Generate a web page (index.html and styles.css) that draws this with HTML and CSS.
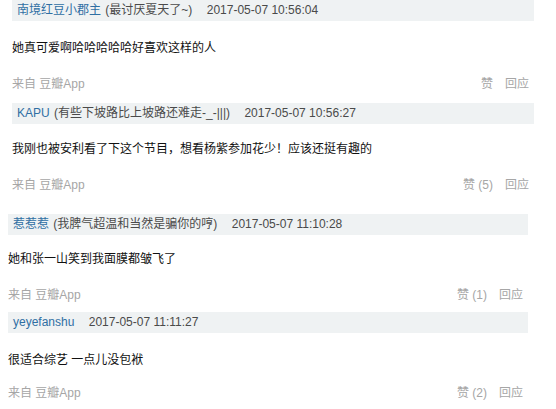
FILE: index.html
```html
<!DOCTYPE html>
<html lang="zh-CN">
<head>
    <meta charset="UTF-8">
    <meta name="viewport" content="width=device-width, initial-scale=1.0">
    <title>回应</title>
    <link rel="stylesheet" href="styles.css">
</head>
<body>
    <section class="comments">
        <div class="comment c1">
            <div class="head">
                <a class="name">南境红豆小郡主</a>
                <span class="sign">(最讨厌夏天了~)</span>
                <span class="time">2017-05-07 10:56:04</span>
            </div>
            <p class="text">她真可爱啊哈哈哈哈哈好喜欢这样的人</p>
            <div class="foot">
                <span>来自 豆瓣App</span>
                <span class="ops"><span>赞</span><span class="reply">回应</span></span>
            </div>
        </div>
        <div class="comment c2">
            <div class="head">
                <a class="name">KAPU</a>
                <span class="sign">(有些下坡路比上坡路还难走-_-|||)</span>
                <span class="time">2017-05-07 10:56:27</span>
            </div>
            <p class="text">我刚也被安利看了下这个节目，想看杨紫参加花少！应该还挺有趣的</p>
            <div class="foot">
                <span>来自 豆瓣App</span>
                <span class="ops"><span>赞 (5)</span><span class="reply">回应</span></span>
            </div>
        </div>
        <div class="comment shifted c3">
            <div class="head">
                <a class="name">惹惹惹</a>
                <span class="sign">(我脾气超温和当然是骗你的哼)</span>
                <span class="time">2017-05-07 11:10:28</span>
            </div>
            <p class="text">她和张一山笑到我面膜都皱飞了</p>
            <div class="foot">
                <span>来自 豆瓣App</span>
                <span class="ops"><span>赞 (1)</span><span class="reply">回应</span></span>
            </div>
        </div>
        <div class="comment shifted c4">
            <div class="head">
                <a class="name">yeyefanshu</a>
                <span class="time">2017-05-07 11:11:27</span>
            </div>
            <p class="text">很适合综艺 一点儿没包袱</p>
            <div class="foot">
                <span>来自 豆瓣App</span>
                <span class="ops"><span>赞 (2)</span><span class="reply">回应</span></span>
            </div>
        </div>
    </section>
</body>
</html>
```

FILE: styles.css
```css
body {
    margin: 0;
    padding: 0;
    background: #fff;
    font-family: "Liberation Sans", "Noto Sans CJK SC", sans-serif;
    font-size: 12px;
    color: #222;
}

.comments {
    display: flex;
    flex-direction: column;
}

.comment {
    margin: 0 22px 0 12px;
}

.comment.shifted {
    margin: 0 28px 0 8px;
}

.c1 { padding-bottom: 9px; }
.c1 .text { margin-top: 17px; }
.c1 .foot { margin-top: 16px; }

.c2 { padding-bottom: 19px; }
.c2 .text { margin-top: 15px; }
.c2 .foot { margin-top: 16px; }

.c3 { padding-bottom: 7px; }
.c3 .text { margin-top: 14px; }
.c3 .foot { margin-top: 16px; }

.c4 .text { margin-top: 17px; }
.c4 .foot { margin-top: 13px; }

.head {
    height: 21px;
    line-height: 21px;
    padding-left: 5px;
    background: #eff2f3;
    color: #4a4a4a;
    white-space: nowrap;
}

.name {
    color: #2f6fa3;
    text-decoration: none;
}

.sign {
    margin-left: 1px;
}

.time {
    margin-left: 11px;
    color: #4a4a4a;
}

.text {
    margin: 0;
    line-height: 20px;
    color: #111;
}

.foot {
    display: flex;
    justify-content: space-between;
    padding-right: 5px;
    line-height: 20px;
    color: #a6a6a6;
}

.reply {
    margin-left: 12px;
}
```
